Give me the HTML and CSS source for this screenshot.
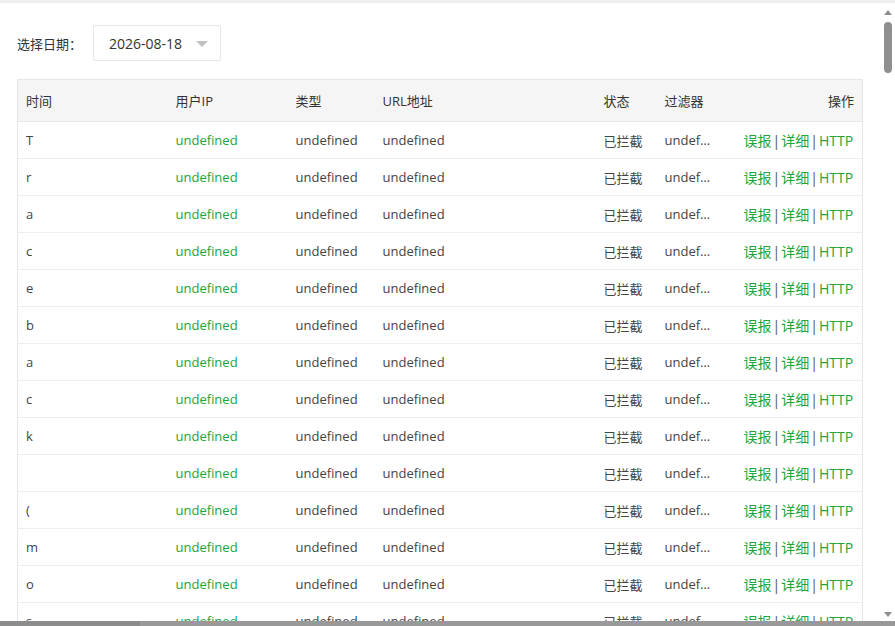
FILE: index.html
```html
<!DOCTYPE html>
<html lang="zh-CN">
<head>
    <meta charset="UTF-8">
    <meta name="viewport" content="width=device-width, initial-scale=1.0">
    <title>拦截日志</title>
    <link rel="stylesheet" href="styles.css">
</head>
<body>
    <div class="topbar"></div>
    <div class="frame">
        <div class="page">
            <div class="toolbar">
                <span class="toolbar-label">选择日期：</span>
                <div class="date-select">
                    <span>2026-08-18</span>
                    <i class="caret"></i>
                </div>
            </div>
            <table class="log-table">
                <colgroup>
                    <col style="width: 150px">
                    <col style="width: 120px">
                    <col style="width: 87px">
                    <col style="width: 221px">
                    <col style="width: 61px">
                    <col style="width: 79px">
                    <col style="width: 127px">
                </colgroup>
                <thead>
                    <tr>
                        <th>时间</th>
                        <th>用户IP</th>
                        <th>类型</th>
                        <th>URL地址</th>
                        <th>状态</th>
                        <th>过滤器</th>
                        <th class="right">操作</th>
                    </tr>
                </thead>
                <tbody id="log-body"></tbody>
            </table>
        </div>
        <div class="vscroll">
            <i class="arrow up"></i>
            <div class="thumb"></div>
            <div class="track-rest"></div>
            <i class="arrow down"></i>
        </div>
    </div>
    <div class="hscroll"><div class="hthumb"></div></div>

    <script>
        // the log came back as a raw string, so every character ends up as a row
        const raw = 'Traceback (most recent call last):\n  File "/www/server/panel/class/panelSite.py", line 1842, in get_waf_logs\n    data = json.loads(public.readFile(path))\nValueError: No JSON object could be decoded';

        const body = document.getElementById("log-body");
        let html = "";
        for (const ch of raw) {
            const text = ch.trim() === "" ? "" : ch.replace("<", "&lt;").replace(">", "&gt;");
            html += `<tr>
                <td>${text}</td>
                <td class="ip">undefined</td>
                <td>undefined</td>
                <td>undefined</td>
                <td>已拦截</td>
                <td class="cut">undefined</td>
                <td class="right ops"><a>误报</a><span class="sep">|</span><a>详细</a><span class="sep">|</span><a>HTTP</a></td>
            </tr>`;
        }
        body.innerHTML = html;
    </script>
</body>
</html>
```

FILE: styles.css
```css
html, body {
    margin: 0;
    height: 100%;
    overflow: hidden;
}

body {
    background: #fff;
    color: #444;
    font-family: "Open Sans", "Noto Sans CJK SC", sans-serif;
    font-size: 13px;
    display: flex;
    flex-direction: column;
}

.topbar {
    height: 3px;
    background: #eee;
    flex-shrink: 0;
}

.frame {
    flex: 1;
    display: flex;
    min-height: 0;
}

.page {
    flex: 1;
    overflow: hidden;
    padding: 22px 17px 20px;
}

/* fake scrollbars, the screenshot browser hides the real ones */
.vscroll {
    width: 15px;
    flex-shrink: 0;
    display: flex;
    flex-direction: column;
    align-items: center;
    padding: 7px 0 4px;
    box-sizing: border-box;
}

.arrow {
    width: 0;
    height: 0;
    margin-left: 1px;
    border-left: 4px solid transparent;
    border-right: 4px solid transparent;
}

.arrow.up {
    border-bottom: 5px solid #8f8f8f;
}

.arrow.down {
    border-top: 5px solid #8f8f8f;
}

.thumb {
    width: 8px;
    height: 51px;
    margin: 7px 0 0 1px;
    background: #8f8f8f;
    border-radius: 4px;
}

.track-rest {
    flex: 1;
}

.hscroll {
    height: 5px;
    flex-shrink: 0;
    background: #999;
}

.hthumb {
    width: 140px;
    height: 100%;
    background: #8c8c8c;
}

.toolbar {
    display: flex;
    align-items: center;
    margin-bottom: 18px;
}

.toolbar-label {
    color: #333;
    margin-right: 11px;
}

.date-select {
    width: 111px;
    height: 34px;
    padding-left: 15px;
    border: 1px solid #e6e6e6;
    border-radius: 2px;
    display: flex;
    align-items: center;
    justify-content: space-between;
    font-size: 14px;
    color: #333;
}

.caret {
    width: 0;
    height: 0;
    margin-right: 12px;
    margin-top: 1px;
    border-left: 6px solid transparent;
    border-right: 6px solid transparent;
    border-top: 6px solid #c2c2c2;
}

.log-table {
    width: 845px;
    table-layout: fixed;
    border-collapse: collapse;
    border: 1px solid #e6e6e6;
}

.log-table th {
    background: #f5f5f5;
    color: #333;
    font-weight: normal;
    text-align: left;
    height: 41px;
    padding: 0 8px;
    border-bottom: 1px solid #e6e6e6;
}

.log-table td {
    height: 36px;
    padding: 0 8px;
    border-bottom: 1px solid #eee;
    white-space: nowrap;
}

.log-table .right {
    text-align: right;
}

.log-table .ip {
    color: #20a53a;
}

.log-table .cut {
    overflow: hidden;
    text-overflow: ellipsis;
    font-variant-ligatures: none;
    padding-right: 23px;
}

.log-table .ops {
    color: #555;
    font-size: 14px;
    padding-right: 9px;
}

.ops a {
    color: #20a53a;
    cursor: pointer;
}

.ops .sep {
    margin: 0 1px;
}
```
